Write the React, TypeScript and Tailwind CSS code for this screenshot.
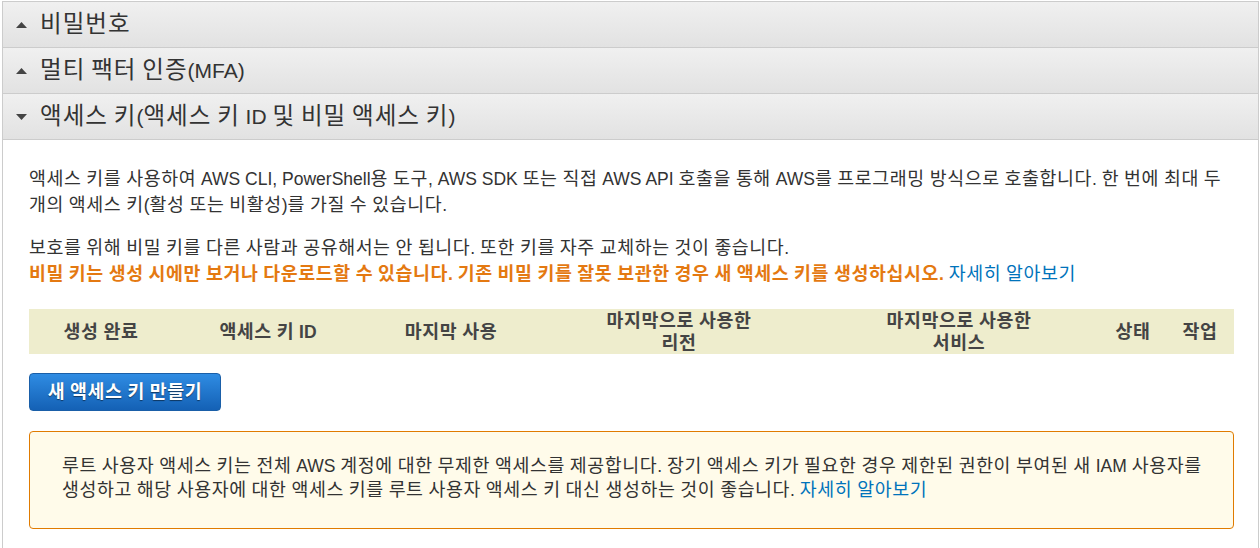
import React from "react";

const font = { fontFamily: '"Liberation Sans", "Noto Sans CJK KR", sans-serif' };

const HANGUL_SPLIT = /([\uAC00-\uD7A3\u3131-\u318E]+)/;
const HANGUL_TEST = /^[\uAC00-\uD7A3\u3131-\u318E]+$/;

function T({ t, c }: { t: string; c: string }) {
  const parts = t.split(HANGUL_SPLIT);
  return (
    <>
      {parts.map((p, i) =>
        HANGUL_TEST.test(p) ? (
          <span key={i} className={c}>
            {p}
          </span>
        ) : (
          <React.Fragment key={i}>{p}</React.Fragment>
        )
      )}
    </>
  );
}

const HB = "text-[1.05em] tracking-[0.6px]";
const HH = "text-[1.12em] tracking-[1px]";

function Tri({ down }: { down?: boolean }) {
  return (
    <svg width="11" height="6" viewBox="0 0 11 6" className="shrink-0">
      {down ? <path d="M0 0 L11 0 L5.5 6 Z" fill="#444" /> : <path d="M0 6 L11 6 L5.5 0 Z" fill="#444" />}
    </svg>
  );
}

function Header({ title, down }: { title: string; down?: boolean }) {
  return (
    <div className="h-[46px] flex items-center gap-[13px] pl-[13px] border-b border-[#cccccc] bg-gradient-to-b from-[#f0f0f0] to-[#e2e2e2] text-[21px] leading-[26px] text-[#333]">
      <Tri down={down} />
      <span>
        <T t={title} c={HH} />
      </span>
    </div>
  );
}

export default function App() {
  return (
    <div className="w-[1260px] h-[548px] overflow-hidden bg-white pt-[1px]" style={font}>
      <div className="ml-[2px] w-[1257px] border border-[#cccccc] bg-white">
        <Header title="비밀번호" />
        <Header title="멀티 팩터 인증(MFA)" />
        <Header title="액세스 키(액세스 키 ID 및 비밀 액세스 키)" down />
        <div className="pl-[26px] pr-[24px] pt-[26px] pb-[40px] text-[17.5px] text-[#333]">
          <p className="leading-[26px]">
            <T
              c={HB}
              t="액세스 키를 사용하여 AWS CLI, PowerShell용 도구, AWS SDK 또는 직접 AWS API 호출을 통해 AWS를 프로그래밍 방식으로 호출합니다. 한 번에 최대 두"
            />
            <br />
            <T c={HB} t="개의 액세스 키(활성 또는 비활성)를 가질 수 있습니다." />
          </p>
          <p className="leading-[25px] mt-[17px]">
            <T c={HB} t="보호를 위해 비밀 키를 다른 사람과 공유해서는 안 됩니다. 또한 키를 자주 교체하는 것이 좋습니다." />
            <br />
            <span className="font-bold text-[#e47911]">
              <T
                c={HB}
                t="비밀 키는 생성 시에만 보거나 다운로드할 수 있습니다. 기존 비밀 키를 잘못 보관한 경우 새 액세스 키를 생성하십시오."
              />
            </span>{" "}
            <a className="text-[#0073bb]">
              <T c={HB} t="자세히 알아보기" />
            </a>
          </p>
          <div className="mt-[22px] h-[45px] bg-[#eeedcd] flex items-center text-[#444] font-bold text-[17.5px] leading-[22px] text-center">
            <div className="w-[144px]">
              <T c={HB} t="생성 완료" />
            </div>
            <div className="w-[190px]">
              <T c={HB} t="액세스 키 ID" />
            </div>
            <div className="w-[176px]">
              <T c={HB} t="마지막 사용" />
            </div>
            <div className="w-[280px]">
              <T c={HB} t="마지막으로 사용한" />
              <br />
              <T c={HB} t="리전" />
            </div>
            <div className="w-[280px]">
              <T c={HB} t="마지막으로 사용한" />
              <br />
              <T c={HB} t="서비스" />
            </div>
            <div className="w-[68px]">
              <T c={HB} t="상태" />
            </div>
            <div className="w-[66px]">
              <T c={HB} t="작업" />
            </div>
          </div>
          <button className="mt-[19px] h-[38px] w-[192px] rounded-[4px] border border-[#1a5fa8] bg-gradient-to-b from-[#2f8ce3] to-[#1461b5] text-white font-bold text-[17.5px] [text-shadow:0_1px_1px_rgba(0,0,0,0.5)]">
            <T c={HB} t="새 액세스 키 만들기" />
          </button>
          <div className="mt-[20px] h-[98px] rounded-[4px] border border-[#e07b00] bg-[#fffbea] pl-[32px] pt-[22px] leading-[24px]">
            <T
              c={HB}
              t="루트 사용자 액세스 키는 전체 AWS 계정에 대한 무제한 액세스를 제공합니다. 장기 액세스 키가 필요한 경우 제한된 권한이 부여된 새 IAM 사용자를"
            />
            <br />
            <T c={HB} t="생성하고 해당 사용자에 대한 액세스 키를 루트 사용자 액세스 키 대신 생성하는 것이 좋습니다." />{" "}
            <a className="text-[#0073bb]">
              <T c={HB} t="자세히 알아보기" />
            </a>
          </div>
        </div>
      </div>
    </div>
  );
}
